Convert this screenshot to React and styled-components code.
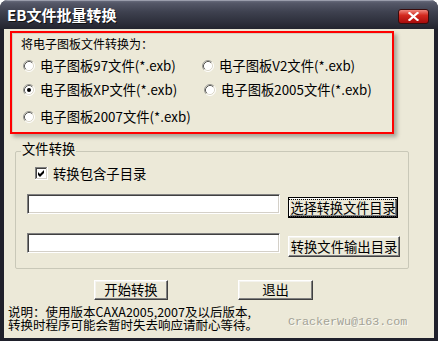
import React from 'react';
import styled, { createGlobalStyle, css } from 'styled-components';

const GlobalStyle = createGlobalStyle`
  html, body {
    margin: 0;
    padding: 0;
    background: #fff;
  }
  body {
    font-family: "Noto Sans CJK SC", "Noto Sans", sans-serif;
  }
`;

const Window = styled.div`
  width: 438px;
  height: 341px;
  background: #1f202b;
  border-radius: 8px 8px 0 0;
  display: flex;
  flex-direction: column;
  overflow: hidden;
`;

const TitleBar = styled.div`
  flex: 0 0 29px;
  display: flex;
  align-items: center;
  padding: 0 9px 0 7px;
  background: linear-gradient(#6f7384 0px, #555868 3px, #3e414f 12px, #2e303c 22px, #23242e 29px);
  box-shadow: inset 0 1px #9a9dab;
`;

const Title = styled.span`
  flex: 1;
  color: #fff;
  font-size: 15px;
  font-weight: bold;
  line-height: 18px;
  text-shadow: 1px 1px #111;
`;

const CloseButton = styled.div`
  width: 31px;
  height: 15px;
  box-sizing: border-box;
  border: 1px solid #3a0c0c;
  border-radius: 3px;
  background: linear-gradient(#f08a80, #d42a20 40%, #a80c0c);
  display: flex;
  align-items: center;
  justify-content: center;
  margin-top: 3px;
`;

const Client = styled.div`
  flex: 1;
  margin: 0 4px 3px 4px;
  background: #ece9d8;
  display: flex;
  flex-direction: column;
  color: #000;
`;

const FormatPanel = styled.div`
  margin: 2px 0 0 6px;
  width: 384px;
  height: 103px;
  box-sizing: border-box;
  border: 2px solid #ff0000;
  box-shadow: 3px 3px 4px rgba(0, 0, 0, 0.3), inset 1px 1px rgba(0, 0, 0, 0.1);
  padding: 4px 0 0 9px;
`;

const PanelLabel = styled.div`
  font-size: 12px;
  line-height: 14px;
`;

const RadioGrid = styled.div`
  display: grid;
  grid-template-columns: 179px 1fr;
  grid-template-rows: 24px 24px 30px;
  align-items: center;
  margin: 3px 0 0 2px;
`;

const RadioOption = styled.label`
  display: flex;
  align-items: center;
  gap: 5px;
  font-size: 13.33px;
  line-height: 16px;
  margin-left: ${p => p.$dx || 0}px;
  white-space: nowrap;
`;

const GroupBox = styled.div`
  margin: 17px 0 0 11px;
  width: 394px;
  height: 118px;
  box-sizing: border-box;
  border: 1px solid #c9c8b8;
  border-radius: 2px;
  padding: 0 0 0 11px;
  display: flex;
  flex-direction: column;
`;

const Legend = styled.div`
  align-self: flex-start;
  margin: -10px 0 0 -6px;
  padding: 0 1px;
  background: #ece9d8;
  font-size: 13.33px;
  line-height: 14px;
`;

const CheckRow = styled.label`
  display: flex;
  align-items: center;
  gap: 5px;
  margin: 11px 0 0 8px;
  height: 13px;
  font-size: 13.33px;
  line-height: 13px;
`;

const PathRow = styled.div`
  display: flex;
  align-items: flex-start;
  gap: 8px;
  margin-top: ${p => p.$top}px;
`;

const PathInput = styled.input`
  width: 253px;
  height: 20px;
  box-sizing: border-box;
  border: 1px solid;
  border-color: #808080 #fff #fff #808080;
  box-shadow: inset 1px 1px #404040, inset -1px -1px #d4d0c8;
  background: #fff;
  padding: 0 3px;
  font: inherit;
  outline: none;
`;

const Button = styled.button`
  width: ${p => p.$w}px;
  height: ${p => p.$h}px;
  margin-top: ${p => p.$top || 0}px;
  box-sizing: border-box;
  padding: 0;
  display: flex;
  align-items: center;
  justify-content: center;
  font-family: inherit;
  font-size: 13.33px;
  line-height: 14px;
  color: #000;
  background: #ece9d8;
  border: 1px solid;
  border-color: #fff #404040 #404040 #fff;
  box-shadow: inset -1px -1px #808080, inset 1px 1px #f4f3ee;
  white-space: nowrap;
  ${p => p.$default && css`
    border-color: #000;
    box-shadow: inset 1px 1px #fff, inset -1px -1px #404040, inset -2px -2px #808080;
  `}
`;

const FocusText = styled.span`
  outline: 1px dotted #000;
  outline-offset: 1px;
  letter-spacing: -0.2px;
`;

const ActionRow = styled.div`
  display: flex;
  margin: 11px 0 0 90px;
  gap: 70px;
`;

const NoteRow = styled.div`
  display: flex;
  align-items: flex-end;
  margin-top: 5px;
  padding-left: 4px;
`;

const Notes = styled.div`
  flex: 0 0 280px;
  font-size: 12.5px;
  line-height: 13px;
  white-space: nowrap;
`;

const Watermark = styled.div`
  font-family: "Liberation Mono", monospace;
  font-size: 11.7px;
  line-height: 12px;
  color: #a3a296;
  text-shadow: 1px 1px #fbfaf4;
  margin-bottom: 3px;
`;

const CloseGlyph = () => (
  <svg width="11" height="9" viewBox="0 0 11 9">
    <path d="M1.5 1 L9.5 8 M9.5 1 L1.5 8" stroke="#fff" strokeWidth="2.2" strokeLinecap="square" />
  </svg>
);

const Radio = ({ checked }) => (
  <svg width="12" height="12" viewBox="0 0 12 12">
    <circle cx="6" cy="6" r="5" fill="#fff" />
    <path d="M9.89 2.11 A5.5 5.5 0 0 0 2.11 9.89" fill="none" stroke="#9a9a94" />
    <path d="M2.11 9.89 A5.5 5.5 0 0 0 9.89 2.11" fill="none" stroke="#fff" />
    <path d="M9.18 2.82 A4.5 4.5 0 0 0 2.82 9.18" fill="none" stroke="#5a5a56" />
    <path d="M2.82 9.18 A4.5 4.5 0 0 0 9.18 2.82" fill="none" stroke="#dcd9cc" />
    {checked && <circle cx="6" cy="6" r="2" fill="#000" />}
  </svg>
);

const CheckBox = () => (
  <svg width="13" height="13" viewBox="0 0 13 13" shapeRendering="crispEdges">
    <rect x="0" y="0" width="13" height="13" fill="#fff" />
    <path d="M0.5 12 V0.5 H12" fill="none" stroke="#808080" />
    <path d="M1.5 11 V1.5 H11" fill="none" stroke="#404040" />
    <path d="M1 11.5 H11.5 V1" fill="none" stroke="#d4d0c8" />
    <path d="M0 12.5 H12.5 V0" fill="none" stroke="#fff" />
    <path d="M3 5 L5 7 L9 3 L9 6 L5 10 L3 8 Z" fill="#000" shapeRendering="auto" />
  </svg>
);

const formats = [
  { label: '电子图板97文件(*.exb)' },
  { label: '电子图板V2文件(*.exb)' },
  { label: '电子图板XP文件(*.exb)', checked: true },
  { label: '电子图板2005文件(*.exb)', dx: 2 },
  { label: '电子图板2007文件(*.exb)' },
];

export default function App() {
  return (
    <>
      <GlobalStyle />
      <Window>
        <TitleBar>
          <Title>EB文件批量转换</Title>
          <CloseButton>
            <CloseGlyph />
          </CloseButton>
        </TitleBar>
        <Client>
          <FormatPanel>
            <PanelLabel>将电子图板文件转换为：</PanelLabel>
            <RadioGrid>
              {formats.map(f => (
                <RadioOption key={f.label} $dx={f.dx}>
                  <Radio checked={f.checked} />
                  {f.label}
                </RadioOption>
              ))}
            </RadioGrid>
          </FormatPanel>

          <GroupBox>
            <Legend>文件转换</Legend>
            <CheckRow>
              <CheckBox />
              转换包含子目录
            </CheckRow>
            <PathRow $top={14}>
              <PathInput />
              <Button $w={110} $h={21} $top={3} $default>
                <FocusText>选择转换文件目录</FocusText>
              </Button>
            </PathRow>
            <PathRow $top={15}>
              <PathInput />
              <Button $w={112} $h={21} $top={3}>转换文件输出目录</Button>
            </PathRow>
          </GroupBox>

          <ActionRow>
            <Button $w={74} $h={20}>开始转换</Button>
            <Button $w={75} $h={20}>退出</Button>
          </ActionRow>

          <NoteRow>
            <Notes>
              说明：使用版本CAXA2005,2007及以后版本,
              <br />
              转换时程序可能会暂时失去响应请耐心等待。
            </Notes>
            <Watermark>CrackerWu@163.com</Watermark>
          </NoteRow>
        </Client>
      </Window>
    </>
  );
}
